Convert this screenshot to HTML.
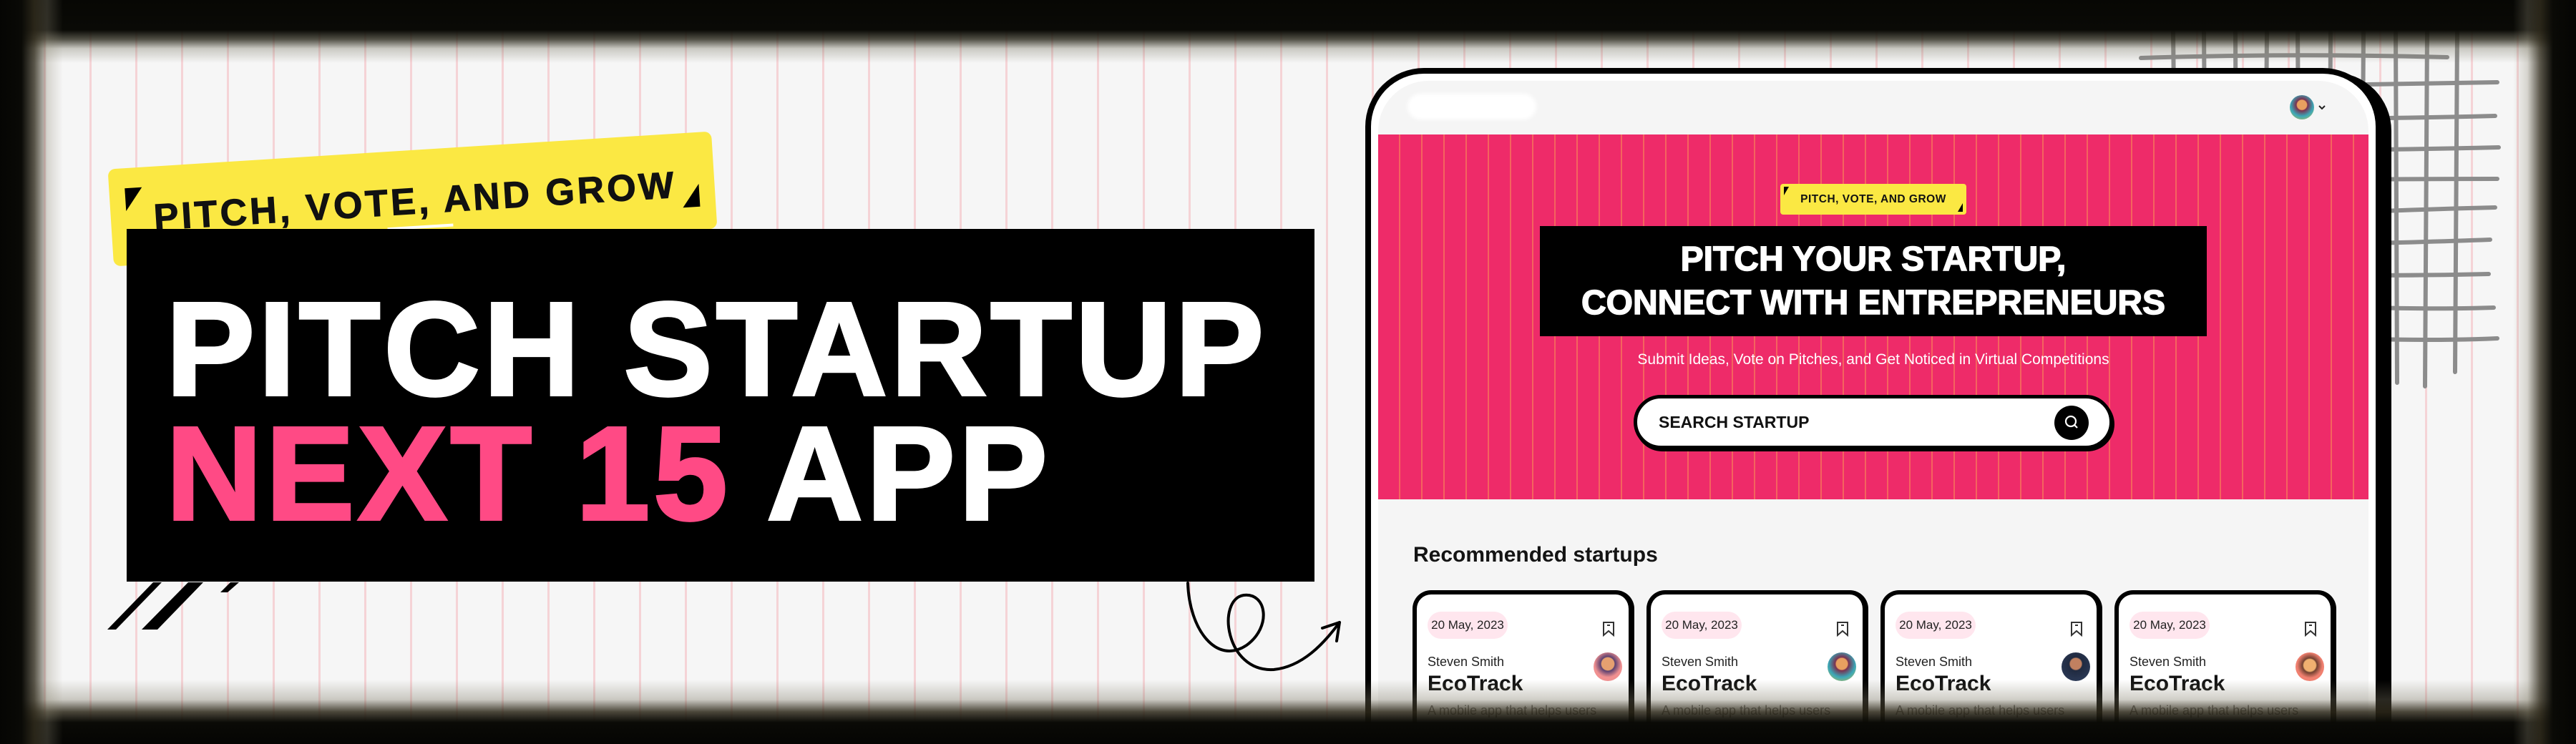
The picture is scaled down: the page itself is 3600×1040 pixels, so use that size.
<!DOCTYPE html>
<html><head><meta charset="utf-8"><style>
*{margin:0;padding:0;box-sizing:border-box}
html,body{width:3600px;height:1040px;overflow:hidden}
body{background:#f6f6f6;font-family:"Liberation Sans",sans-serif}
#w{position:relative;width:3600px;height:1040px;overflow:hidden;background:#f6f6f6}
.paper{position:absolute;inset:0;background:repeating-linear-gradient(90deg,transparent 0 61px,#f5d3d6 61px 64px)}
.abs{position:absolute}
.title{position:absolute;font-weight:900;font-size:186px;line-height:186px;letter-spacing:5px;color:#fff;white-space:nowrap;-webkit-text-stroke:4px currentColor}
.tab{position:absolute;left:1908px;top:95px;width:1420px;height:945px;border:8px solid #000;border-bottom:0;border-radius:82px 82px 0 0;background:#fff;box-shadow:14px 6px 0 #000;padding:10px 10px 0}
.scr{width:100%;height:100%;background:#f5f5f5;border-radius:70px 70px 0 0;position:relative;overflow:hidden}
.card{position:absolute;top:825px;width:310px;height:215px;border:6px solid #000;border-bottom:0;border-right-width:8px;border-radius:26px 26px 0 0;background:#fff;overflow:hidden}
.pill{position:absolute;left:15px;top:24px;width:112px;height:38px;border-radius:19px;background:#ffe6ee;font-size:17px;line-height:38px;text-align:center;color:#222}
.nm{position:absolute;left:15px;top:84px;font-size:18px;color:#222}
.ec{position:absolute;left:15px;top:108px;font-size:30px;font-weight:700;color:#111}
.ds{position:absolute;left:15px;top:152px;font-size:18px;color:#777}
.av{position:absolute;left:247px;top:81px;width:40px;height:40px;border-radius:50%}
.bm{position:absolute;left:258px;top:37px}
</style></head><body><div id="w">
<div class="paper"></div>

<svg class="abs" style="left:0;top:0" width="3600" height="1040">
<g stroke="#8c8c8c" stroke-width="6" fill="none" stroke-linecap="round">
<path d="M3037 45 L3040 300 M3080 45 L3082 300 M3124 45 L3125 300 M3168 45 L3166 300 M3211 45 L3213 300 M3257 45 L3256 300 M3303 45 L3300 535 M3348 45 L3350 535 M3392 45 L3389 540 M3434 45 L3431 520"/>
<path d="M2992 81 Q3200 74 3420 80 M3000 123 Q3250 118 3490 115 M3000 166 Q3250 168 3487 162 M3020 209 Q3250 212 3492 206 M3100 253 Q3300 250 3490 250 M3280 297 Q3400 292 3487 290 M3280 341 Q3400 338 3480 335 M3280 385 Q3400 385 3478 383 M3280 429 Q3400 433 3485 430 M3280 473 Q3400 477 3490 473"/>
</g>
</svg>

<div class="abs" style="left:154px;top:210px;width:845px;height:136px;background:#fbe843;border-radius:10px;transform:rotate(-3.6deg)">
<div class="abs" style="left:22px;top:28px;width:0;height:0;border-top:32px solid #000;border-right:24px solid transparent"></div>
<div class="abs" style="right:22px;bottom:32px;width:0;height:0;border-bottom:32px solid #000;border-left:24px solid transparent"></div>
<div class="abs" style="left:60px;top:42px;font-size:52px;font-weight:700;letter-spacing:4px;color:#111;white-space:nowrap;-webkit-text-stroke:1px #111">PITCH, VOTE, AND GROW</div>
<div class="abs" style="left:385px;top:106px;width:92px;height:4px;background:#fff"></div>
</div>

<div class="abs" style="left:177px;top:320px;width:1660px;height:493px;background:#000"></div>
<div class="title" style="left:232px;top:396px">PITCH STARTUP</div>
<div class="title" style="left:232px;top:570px"><span style="color:#ff4a85">NEXT 15</span> APP</div>

<svg class="abs" style="left:0;top:780px" width="1900" height="200">
<polygon points="150,100 162,100 226,34 214,34" fill="#000"/>
<polygon points="198,100 220,100 284,34 263,34" fill="#000"/>
<polygon points="308,48 318,48 334,34 322,34" fill="#000"/>
<g fill="none" stroke="#000" stroke-width="4" stroke-linecap="round">
<path d="M1660 35 C1662 100 1700 150 1742 122 C1778 96 1770 48 1738 52 C1700 58 1712 160 1780 156 C1820 152 1850 120 1872 90"/>
<path d="M1872 90 L1848 98 M1872 90 L1868 116"/>
</g>
</svg>

<div class="tab"><div class="scr">
<div class="abs" style="left:41px;top:18px;width:180px;height:36px;border-radius:18px;background:#fff;filter:blur(3px)"></div>
<div class="abs" style="left:1274px;top:20px;width:34px;height:34px;border-radius:50%;background:radial-gradient(circle at 50% 40%,#e8a060 0 25%,#7a3050 30%,#3aa8b8 60%,#d8c040)"></div>
<svg class="abs" style="left:1313px;top:32px" width="12" height="10"><path d="M2 3 L6 7 L10 3" stroke="#222" stroke-width="2" fill="none"/></svg>
<div class="abs" style="left:0;top:75px;width:1384px;height:510px;background:#ee2b69 repeating-linear-gradient(90deg,transparent 0 29px,#f4645e 29px 31px)">
<div class="abs" style="left:562px;top:69px;width:260px;height:43px;background:#fbe843;border-radius:4px">
<div class="abs" style="left:5px;top:4px;border-top:12px solid #000;border-right:7px solid transparent"></div>
<div class="abs" style="right:5px;bottom:4px;border-bottom:12px solid #000;border-left:7px solid transparent"></div>
<div style="text-align:center;font-size:15.5px;font-weight:700;line-height:43px;color:#111;letter-spacing:.5px">PITCH, VOTE, AND GROW</div>
</div>
<div class="abs" style="left:226px;top:128px;width:932px;height:154px;background:#000;color:#fff;text-align:center;font-size:48px;font-weight:900;line-height:61px;padding-top:16px;-webkit-text-stroke:1.5px #fff">PITCH YOUR STARTUP,<br>CONNECT WITH ENTREPRENEURS</div>
<div class="abs" style="left:0;width:1384px;top:303px;text-align:center;color:#fff;font-size:21px">Submit Ideas, Vote on Pitches, and Get Noticed in Virtual Competitions</div>
<div class="abs" style="left:357px;top:364px;width:670px;height:76px;border:5px solid #000;border-radius:40px;background:#fff;box-shadow:2px 3px 0 #000">
<div class="abs" style="left:30px;top:0;line-height:66px;font-size:23px;font-weight:700;color:#111">SEARCH STARTUP</div>
<div class="abs" style="left:583px;top:10px;width:48px;height:48px;border-radius:50%;background:#000">
<svg width="48" height="48"><circle cx="23" cy="22" r="7" stroke="#fff" stroke-width="2.2" fill="none"/><path d="M28 27 L32 31" stroke="#fff" stroke-width="2.2"/></svg></div>
</div>
</div>
<div class="abs" style="left:49px;top:646px;font-size:30px;font-weight:700;color:#141414">Recommended startups</div>
</div></div>

<div class="card" style="left:1974px"><div class="pill">20 May, 2023</div><svg class="bm" width="20" height="22"><path d="M3 2 H17 V20 L10 14 L3 20 Z" stroke="#333" stroke-width="2" fill="none"/><path d="M8 6 H12" stroke="#333" stroke-width="2"/></svg><div class="nm">Steven Smith</div><div class="ec">EcoTrack</div><div class="ds">A mobile app that helps users</div><div class="av" style="background:radial-gradient(circle at 50% 40%,#e6a070 0 28%,#5a4070 32%,#f09090 60%)"></div></div>
<div class="card" style="left:2301px"><div class="pill">20 May, 2023</div><svg class="bm" width="20" height="22"><path d="M3 2 H17 V20 L10 14 L3 20 Z" stroke="#333" stroke-width="2" fill="none"/><path d="M8 6 H12" stroke="#333" stroke-width="2"/></svg><div class="nm">Steven Smith</div><div class="ec">EcoTrack</div><div class="ds">A mobile app that helps users</div><div class="av" style="background:radial-gradient(circle at 50% 40%,#e8a060 0 25%,#7a3050 30%,#3aa8b8 60%,#d8c040)"></div></div>
<div class="card" style="left:2628px"><div class="pill">20 May, 2023</div><svg class="bm" width="20" height="22"><path d="M3 2 H17 V20 L10 14 L3 20 Z" stroke="#333" stroke-width="2" fill="none"/><path d="M8 6 H12" stroke="#333" stroke-width="2"/></svg><div class="nm">Steven Smith</div><div class="ec">EcoTrack</div><div class="ds">A mobile app that helps users</div><div class="av" style="background:radial-gradient(circle at 50% 40%,#c08060 0 25%,#202a40 30%,#304060)"></div></div>
<div class="card" style="left:2955px"><div class="pill">20 May, 2023</div><svg class="bm" width="20" height="22"><path d="M3 2 H17 V20 L10 14 L3 20 Z" stroke="#333" stroke-width="2" fill="none"/><path d="M8 6 H12" stroke="#333" stroke-width="2"/></svg><div class="nm">Steven Smith</div><div class="ec">EcoTrack</div><div class="ds">A mobile app that helps users</div><div class="av" style="background:radial-gradient(circle at 50% 45%,#f0b070 0 28%,#704030 34%,#f08070 60%)"></div></div>

<div class="abs" style="left:0;top:0;width:3600px;height:90px;background:linear-gradient(180deg,#070704 0,#0a0a06 42px,rgba(40,38,25,.8) 55px,rgba(120,118,100,.35) 68px,rgba(245,245,245,0) 88px)"></div>
<div class="abs" style="left:0;top:950px;width:3600px;height:90px;background:linear-gradient(0deg,#050503 0,#0a0a06 30px,rgba(45,40,25,.85) 45px,rgba(120,115,95,.35) 62px,rgba(245,245,245,0) 90px)"></div>
<div class="abs" style="left:0;top:0;width:90px;height:1040px;background:linear-gradient(90deg,#050503 0,#0a0a06 30px,rgba(50,45,30,.8) 48px,rgba(140,135,115,.3) 66px,rgba(245,245,245,0) 88px)"></div>
<div class="abs" style="right:0;top:0;width:90px;height:1040px;background:linear-gradient(270deg,#050503 0,#0a0a06 32px,rgba(50,45,30,.8) 50px,rgba(140,135,115,.3) 68px,rgba(245,245,245,0) 88px)"></div>
</div></body></html>
